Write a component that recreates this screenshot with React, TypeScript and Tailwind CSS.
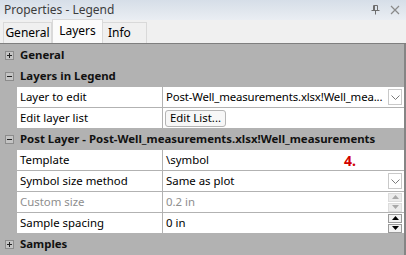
import React from 'react'

const font = { fontFamily: '"Noto Sans", "Open Sans", Arial, sans-serif' }

const Toggle = ({ open }: { open: boolean }) => (
  <div className="relative w-[9px] h-[9px] border border-[#8c8c8c] bg-[#c4c4c4] shrink-0">
    <div className="absolute left-[1px] top-[3px] w-[5px] h-[1px] bg-[#222]" />
    {!open && <div className="absolute left-[3px] top-[1px] w-[1px] h-[5px] bg-[#222]" />}
  </div>
)

const Category = ({ label, open }: { label: string; open: boolean }) => (
  <div className="h-[21px] pt-[1px]">
    <div className="h-[20px] flex items-center pl-[5px] gap-[6px]">
      <Toggle open={open} />
      <span className="text-[11.4px] font-bold text-[#111] whitespace-nowrap">{label}</span>
    </div>
  </div>
)

const Chevron = () => (
  <div className="w-[14px] h-[16px] border border-[#c9c9c9] bg-white flex items-center justify-center shrink-0">
    <svg width="9" height="5" viewBox="0 0 9 5">
      <path d="M0.5 0.5 L4.5 4.5 L8.5 0.5" fill="none" stroke="#7a7a7a" strokeWidth="1" />
    </svg>
  </div>
)

const Spinner = ({ disabled }: { disabled?: boolean }) => {
  const c = disabled ? '#a8a8a8' : '#000'
  const bg = disabled ? 'bg-[#ececec] border-[#dcdcdc]' : 'bg-[#f2f2f2] border-[#9a9a9a]'
  return (
    <div className="flex flex-col gap-[1px] w-[14px] shrink-0">
      <div className={`h-[9px] border ${bg} flex items-center justify-center`}>
        <svg width="7" height="4" viewBox="0 0 7 4">
          <path d="M0 4 L3.5 0 L7 4 Z" fill={c} />
        </svg>
      </div>
      <div className={`h-[9px] border ${bg} flex items-center justify-center`}>
        <svg width="7" height="4" viewBox="0 0 7 4">
          <path d="M0 0 L3.5 4 L7 0 Z" fill={c} />
        </svg>
      </div>
    </div>
  )
}

const Row = ({
  name,
  children,
  disabled,
}: {
  name: string
  children: React.ReactNode
  disabled?: boolean
}) => (
  <div className="h-[21px] pt-[1px] pl-[17px] flex">
    <div
      className={`w-[145px] h-[20px] bg-white flex items-center pl-[3px] text-[11.4px] whitespace-nowrap ${
        disabled ? 'text-[#8e8e8e]' : 'text-black'
      }`}
    >
      {name}
    </div>
    <div
      className={`relative flex-1 ml-[1px] h-[20px] bg-white flex items-center text-[11.4px] pr-[2px] min-w-0 ${
        disabled ? 'text-[#8e8e8e]' : 'text-black'
      }`}
    >
      {children}
    </div>
  </div>
)

export default function App() {
  return (
    <div className="w-[406px] h-[255px] overflow-hidden bg-[#f0f0f0] flex flex-col" style={font}>
      {/* Title bar */}
      <div className="h-[20px] bg-gradient-to-b from-[#d6dee8] to-[#eaeef3] flex items-center pl-[4px] pr-[6px]">
        <span className="text-[12px] text-[#3c3c3c]">Properties - Legend</span>
        <div className="ml-auto flex items-center gap-[10px]">
          <svg width="9" height="10" viewBox="0 0 9 10">
            <path d="M2.5 0.5 H6.5 V5.5 H2.5 Z M3.5 0.5 V5.5 M0.5 5.5 H8.5 M4.5 5.5 V9.5" fill="none" stroke="#6e6e6e" strokeWidth="1" />
          </svg>
          <svg width="10" height="10" viewBox="0 0 10 10">
            <path d="M1 1 L9 9 M9 1 L1 9" stroke="#8a8a8a" strokeWidth="1.2" />
          </svg>
        </div>
      </div>

      {/* Tabs */}
      <div className="h-[24px] flex items-end pl-[3px] border-b border-[#7f7f7f]">
        <div className="h-[21px] w-[49px] border border-b-0 border-[#d9d9d9] bg-[#f0f0f0] flex items-center justify-center text-[12px] text-black">
          General
        </div>
        <div className="h-[24px] w-[51px] border border-b-0 border-[#d9d9d9] bg-[#fbfbfb] flex items-start pt-[2px] justify-center text-[12px] text-black">
          Layers
        </div>
        <div className="h-[21px] w-[44px] border border-b-0 border-l-0 border-[#d9d9d9] bg-[#f0f0f0] flex items-center pl-[5px] text-[12px] text-black">
          Info
        </div>
      </div>

      {/* Property grid */}
      <div className="flex-1 bg-[#b2b2b2] border-r-2 border-[#858585] flex flex-col">
        <Category label="General" open={false} />
        <Category label="Layers in Legend" open />
        <Row name="Layer to edit">
          <span className="pl-[3px] flex-1 whitespace-nowrap overflow-hidden tracking-[-0.15px]">Post-Well_measurements.xlsx!Well_mea...</span>
          <Chevron />
        </Row>
        <Row name="Edit layer list">
          <div className="ml-[2px] h-[17px] px-[4px] border border-[#b5b5b5] rounded-[3px] bg-[#f7f7f7] flex items-center">
            Edit List...
          </div>
        </Row>
        <Category label="Post Layer - Post-Well_measurements.xlsx!Well_measurements" open />
        <Row name="Template">
          <span className="pl-[3px]">\symbol</span>
          <span className="absolute left-[181px] top-[0px] text-[14px] font-bold text-[#d20000]">4.</span>
        </Row>
        <Row name="Symbol size method">
          <span className="pl-[3px] flex-1">Same as plot</span>
          <Chevron />
        </Row>
        <Row name="Custom size" disabled>
          <span className="pl-[3px] flex-1">0.2 in</span>
          <Spinner disabled />
        </Row>
        <Row name="Sample spacing">
          <span className="pl-[3px] flex-1">0 in</span>
          <Spinner />
        </Row>
        <Category label="Samples" open={false} />
      </div>
    </div>
  )
}
